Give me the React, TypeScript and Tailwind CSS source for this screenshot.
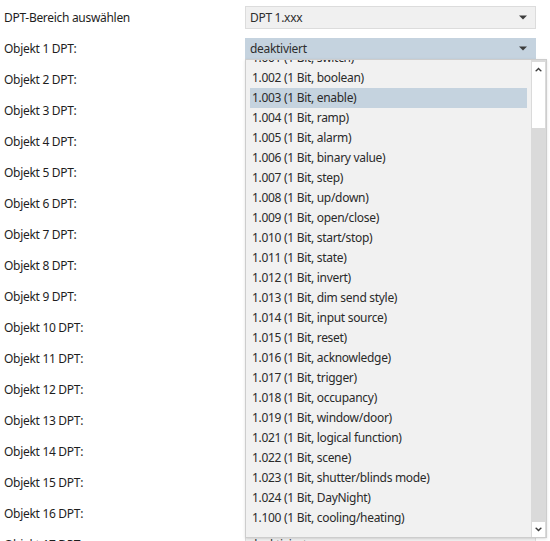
const dpts = [
  '1.001 (1 Bit, switch)',
  '1.002 (1 Bit, boolean)',
  '1.003 (1 Bit, enable)',
  '1.004 (1 Bit, ramp)',
  '1.005 (1 Bit, alarm)',
  '1.006 (1 Bit, binary value)',
  '1.007 (1 Bit, step)',
  '1.008 (1 Bit, up/down)',
  '1.009 (1 Bit, open/close)',
  '1.010 (1 Bit, start/stop)',
  '1.011 (1 Bit, state)',
  '1.012 (1 Bit, invert)',
  '1.013 (1 Bit, dim send style)',
  '1.014 (1 Bit, input source)',
  '1.015 (1 Bit, reset)',
  '1.016 (1 Bit, acknowledge)',
  '1.017 (1 Bit, trigger)',
  '1.018 (1 Bit, occupancy)',
  '1.019 (1 Bit, window/door)',
  '1.021 (1 Bit, logical function)',
  '1.022 (1 Bit, scene)',
  '1.023 (1 Bit, shutter/blinds mode)',
  '1.024 (1 Bit, DayNight)',
  '1.100 (1 Bit, cooling/heating)',
];

const selected = '1.003 (1 Bit, enable)';

function Caret() {
  return (
    <svg width="8" height="5" viewBox="0 0 8 5" className="shrink-0">
      <path d="M0 0.5 H8 L4 4.5 Z" fill="#3c3c3c" />
    </svg>
  );
}

function Combo({ value, active }: { value: string; active?: boolean }) {
  return (
    <div
      className={
        active
          ? 'flex h-[22px] w-[291px] items-center justify-between border border-[#c5d3df] bg-[#c5d3df] pl-[4px] pr-[8px] text-[#2d2d2d]'
          : 'flex h-[23px] w-[291px] items-center justify-between border border-[#dcdcdc] bg-[#f0f0f0] pl-[4px] pr-[8px] text-[#2d2d2d]'
      }
    >
      <span>{value}</span>
      <Caret />
    </div>
  );
}

function DropdownList() {
  return (
    <div className="absolute left-[245px] top-[59px] flex h-[479px] w-[302px] border border-[#cdcdcd] bg-[#f1f1f1] shadow-sm">
      {/* Einträge, leicht nach oben gescrollt */}
      <div className="flex-1 overflow-hidden px-[4px]">
        <div className="-mt-[12px]">
          {dpts.map((d) => (
            <div
              key={d}
              className={
                d === selected
                  ? 'flex h-[20px] items-center bg-[#c5d3df] pl-[2px] text-[#2a2a2a]'
                  : 'flex h-[20px] items-center pl-[2px] text-[#2a2a2a]'
              }
            >
              {d}
            </div>
          ))}
        </div>
      </div>

      {/* Scrollbar */}
      <div className="flex w-[15px] flex-col bg-[#dadada] px-[1px] pt-[2px]">
        <div className="flex h-[15px] items-center justify-center bg-white">
          <svg width="7" height="5" viewBox="0 0 7 5">
            <path d="M0 4 L3.5 0.5 L7 4 L5.5 4.5 L3.5 2.5 L1.5 4.5 Z" fill="#3c3c3c" />
          </svg>
        </div>
        <div className="h-[51px] bg-white" />
        <div className="flex-1" />
        <div className="flex h-[15px] items-center justify-center bg-white">
          <svg width="7" height="5" viewBox="0 0 7 5">
            <path d="M0 1 L3.5 4.5 L7 1 L5.5 0.5 L3.5 2.5 L1.5 0.5 Z" fill="#3c3c3c" />
          </svg>
        </div>
      </div>
    </div>
  );
}

export default function App() {
  const rows = Array.from({ length: 18 }, (_, i) => i + 1);

  return (
    <div
      className="relative h-[541px] w-[550px] overflow-hidden bg-white pt-[2px] text-[12px] tracking-[-0.3px] text-[#1e1e1e]"
      style={{ fontFamily: '"Noto Sans", "Open Sans", sans-serif' }}
    >
      <div className="flex h-[31px] items-center">
        <div className="w-[245px] pl-[4px]">DPT-Bereich auswählen</div>
        <Combo value="DPT 1.xxx" />
      </div>

      {rows.map((n) => (
        <div key={n} className="flex h-[31px] items-center">
          <div className="w-[245px] pl-[4px]">Objekt {n} DPT:</div>
          <Combo value="deaktiviert" active={n === 1} />
        </div>
      ))}

      <DropdownList />
    </div>
  );
}
